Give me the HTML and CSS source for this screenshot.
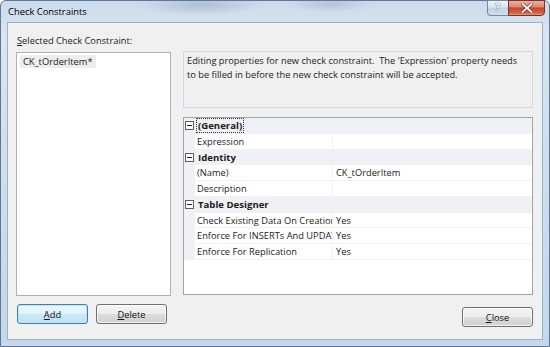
FILE: index.html
```html
<!DOCTYPE html>
<html>
<head>
<meta charset="utf-8">
<link rel="stylesheet" href="styles.css">
</head>
<body>
<div class="window">
  <div class="titlebar">
    <span class="title">Check Constraints</span>
    <div class="caption-btns">
      <div class="cap-help"><span>?</span></div>
      <div class="cap-close">
        <svg width="12" height="10" viewBox="0 0 12 10"><path d="M1.5 1 L10.5 9 M10.5 1 L1.5 9" stroke="#7a2a1c" stroke-width="3.2" stroke-linecap="square"/><path d="M1.5 1 L10.5 9 M10.5 1 L1.5 9" stroke="#ffffff" stroke-width="1.8" stroke-linecap="square"/></svg>
      </div>
    </div>
  </div>
  <div class="client">
    <div class="left-col">
      <div class="caption"><u>S</u>elected Check Constraint:</div>
      <div class="listbox">
        <div class="list-item">CK_tOrderItem*</div>
      </div>
      <div class="btn-row">
        <div class="btn btn-default"><u>A</u>dd</div>
        <div class="btn"><u>D</u>elete</div>
      </div>
    </div>
    <div class="right-col">
      <div class="desc">Editing properties for new check constraint.&nbsp; The 'Expression' property needs to be filled in before the new check constraint will be accepted.</div>
      <div class="propgrid">
        <div class="cat-row"><span class="gutter"><span class="toggle"></span></span><span class="cat-label focus">(General)</span></div>
        <div class="prop-row"><span class="gutter"></span><span class="pname">Expression</span><span class="pval"></span></div>
        <div class="cat-row"><span class="gutter"><span class="toggle"></span></span><span class="cat-label">Identity</span></div>
        <div class="prop-row"><span class="gutter"></span><span class="pname">(Name)</span><span class="pval">CK_tOrderItem</span></div>
        <div class="prop-row"><span class="gutter"></span><span class="pname">Description</span><span class="pval"></span></div>
        <div class="cat-row"><span class="gutter"><span class="toggle"></span></span><span class="cat-label">Table Designer</span></div>
        <div class="prop-row"><span class="gutter"></span><span class="pname">Check Existing Data On Creation Or Re-Enabling</span><span class="pval">Yes</span></div>
        <div class="prop-row"><span class="gutter"></span><span class="pname">Enforce For INSERTs And UPDATEs</span><span class="pval">Yes</span></div>
        <div class="prop-row"><span class="gutter"></span><span class="pname">Enforce For Replication</span><span class="pval">Yes</span></div>
      </div>
      <div class="close-row">
        <div class="btn"><u>C</u>lose</div>
      </div>
    </div>
  </div>
</div>
</body>
</html>
```
FILE: styles.css
```css
html, body {
  margin: 0;
  padding: 0;
}
body {
  width: 550px;
  height: 347px;
  overflow: hidden;
  font-family: "Open Sans", "Noto Sans", sans-serif;
  font-size: 9.3px;
  color: #1b1b1b;
}
.window {
  box-sizing: border-box;
  width: 550px;
  height: 347px;
  border: 1px solid #5b7896;
  border-radius: 6px 6px 0 0;
  display: flex;
  flex-direction: column;
  background:
    radial-gradient(ellipse 60px 10px at 200px 4px, rgba(120,140,165,0.35), rgba(120,140,165,0) 100%),
    radial-gradient(ellipse 40px 8px at 330px 3px, rgba(120,140,165,0.3), rgba(120,140,165,0) 100%),
    linear-gradient(180deg, #cbdaea 0%, #dae5f1 10%, #d0ddeb 50%, #c5d7e9 100%);
}
.titlebar {
  height: 21px;
  display: flex;
  align-items: flex-start;
  justify-content: space-between;
  padding-left: 7px;
}
.title {
  line-height: 21px;
  font-size: 9.4px;
  color: #000;
}
.caption-btns {
  display: flex;
  margin-right: 4px;
  margin-top: -1px;
}
.cap-help {
  box-sizing: border-box;
  width: 21px;
  height: 16px;
  border: 1px solid #7488a0;
  border-right: none;
  border-radius: 0 0 0 4px;
  background: linear-gradient(180deg, #eef3f8 0%, #d9e3ee 45%, #c3d1e1 50%, #d2deeb 100%);
  display: flex;
  align-items: center;
  justify-content: center;
}
.cap-help span {
  font-family: "DejaVu Sans", sans-serif;
  font-size: 10px;
  font-weight: bold;
  color: #f4f7fa;
  text-shadow: 0 0 1px #5d7089, 0 0 1px #5d7089;
  line-height: 10px;
}
.cap-close {
  box-sizing: border-box;
  width: 37px;
  height: 16px;
  border: 1px solid #70352c;
  border-radius: 0 0 4px 0;
  background: linear-gradient(180deg, #e9b1a4 0%, #d98b79 40%, #c8472c 50%, #d5603f 85%, #e69a79 100%);
  display: flex;
  align-items: center;
  justify-content: center;
}
.cap-close svg {
  display: block;
}
.client {
  flex: 1;
  margin: 0 6px 6px 6px;
  border: 1px solid #9cb0c6;
  background: #f0f0f0;
  display: grid;
  grid-template-columns: 155px 350px;
  column-gap: 12px;
  padding: 10px 0 0 8px;
}
.left-col {
  display: flex;
  flex-direction: column;
}
.caption {
  line-height: 16px;
  height: 16px;
  margin-bottom: 3px;
  padding-left: 1px;
}
.listbox {
  box-sizing: border-box;
  height: 244px;
  background: #fff;
  border: 1px solid #abb2ba;
  padding: 2px 0 0 3px;
}
.list-item {
  display: inline-block;
  padding: 0 3px;
  height: 13px;
  line-height: 13px;
  background: #ededed;
}
.btn-row {
  display: flex;
  gap: 8px;
  margin-top: 8px;
  padding-left: 1px;
}
.btn {
  box-sizing: border-box;
  width: 71px;
  height: 20px;
  border: 1px solid #707070;
  border-radius: 3px;
  background: linear-gradient(180deg, #f4f4f4 0%, #ececec 48%, #dddddd 52%, #d0d0d0 100%);
  box-shadow: inset 0 0 0 1px rgba(255,255,255,0.7);
  display: flex;
  align-items: center;
  justify-content: center;
  color: #111;
}
.btn-default {
  border-color: #3d7fb0;
  background: linear-gradient(180deg, #eef8fd 0%, #dff2fc 48%, #cbe9f8 52%, #bde0f2 100%);
  box-shadow: inset 0 0 0 1px #bfe5f7;
}
.right-col {
  display: flex;
  flex-direction: column;
  padding-top: 18px;
}
.desc {
  box-sizing: border-box;
  height: 57px;
  border: 1px solid #d4d9dd;
  background: #f0f0f0;
  padding: 2px 10px 2px 3px;
  line-height: 14px;
  font-size: 9.25px;
}
.propgrid {
  box-sizing: border-box;
  height: 178px;
  margin-top: 9px;
  border: 1px solid #9ea4aa;
  background: #fff;
  overflow: hidden;
}
.cat-row, .prop-row {
  box-sizing: border-box;
  height: 15.75px;
  display: flex;
  align-items: center;
}
.cat-row {
  background: #eff1f4;
}
.prop-row {
  border-bottom: 1px solid #f2f2f2;
}
.gutter {
  width: 11px;
  align-self: stretch;
  background: #eff1f4;
  display: flex;
  align-items: center;
  justify-content: center;
  flex: none;
}
.toggle {
  box-sizing: border-box;
  width: 9px;
  height: 9px;
  border: 1px solid #5e5e5e;
  background: #fff;
  position: relative;
}
.toggle::after {
  content: "";
  position: absolute;
  left: 1px;
  right: 1px;
  top: 3px;
  height: 1px;
  background: #222;
}
.cat-label {
  font-weight: bold;
  font-size: 9.6px;
  margin-left: 1px;
  line-height: 13px;
  padding: 0 1px;
  border: 1px solid transparent;
}
.cat-label.focus {
  border: 1px dotted #333;
}
.pname {
  box-sizing: border-box;
  width: 138px;
  flex: none;
  align-self: stretch;
  line-height: 15px;
  padding-left: 2px;
  white-space: nowrap;
  overflow: hidden;
  border-right: 1px solid #f2f2f2;
}
.pval {
  flex: 1;
  padding-left: 3px;
  line-height: 15px;
  align-self: stretch;
  white-space: nowrap;
}
.close-row {
  display: flex;
  justify-content: flex-end;
  margin-top: 12px;
}
```
